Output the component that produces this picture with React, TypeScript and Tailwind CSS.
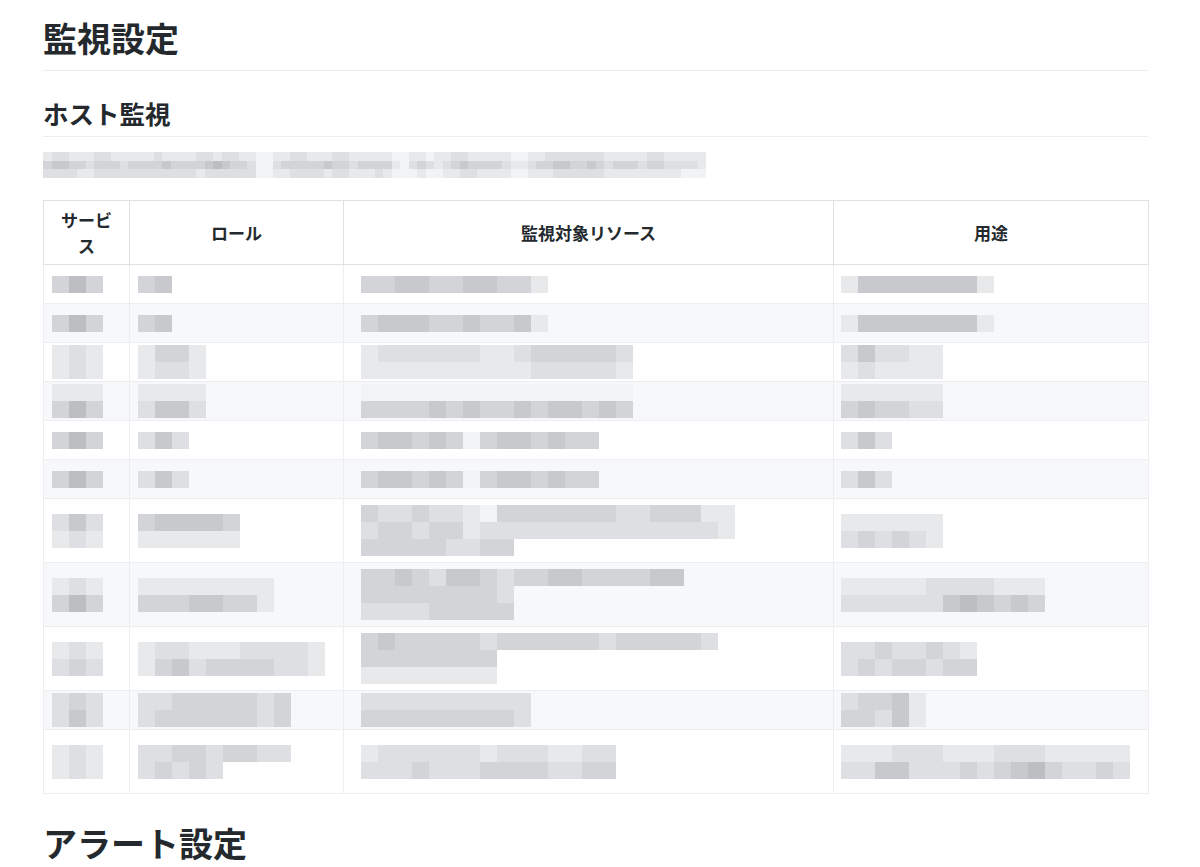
import React from 'react';

// pixelated (redacted) content is drawn as blocks of grey cells
const shade: Record<string, string> = {
    '.': 'bg-transparent',
    '1': 'bg-[#f2f3f5]',
    '2': 'bg-[#e8e9eb]',
    '3': 'bg-[#dedfe2]',
    '4': 'bg-[#d3d4d7]',
    '5': 'bg-[#c8c9cc]',
    '6': 'bg-[#bcbec1]',
};

interface MosaicProps {
    lines: string[];
    small?: boolean;
}

const Mosaic = ({ lines, small }: MosaicProps) => (
    <div className="flex flex-col">
        {lines.map((line, i) => (
            <div key={i} className="flex">
                {line.split('').map((ch, j) => (
                    <span
                        key={j}
                        className={`${small ? 'w-[8.5px] h-[8.7px]' : 'w-[17px] h-[17px]'} shrink-0 ${shade[ch] ?? 'bg-transparent'}`}
                    />
                ))}
            </div>
        ))}
    </div>
);

interface Row {
    h: string;
    c: string[][];
}

const rows: Row[] = [
    { h: 'h-[39px]', c: [['464'], ['45'], ['44554455442'], ['255555552']] },
    { h: 'h-[39px]', c: [['464'], ['45'], ['45554454452'], ['255555552']] },
    { h: 'h-[39px]', c: [['232', '232'], ['2442', '2332'], ['2333333223444443', '2222222222333332'], ['353322', '232222']] },
    { h: 'h-[39px]', c: [['222', '464'], ['2222', '3553'], ['1111111111111111', '4444545445455454'], ['222222', '454433']] },
    { h: 'h-[39px]', c: [['464'], ['353'], ['45545414554544'], ['353']] },
    { h: 'h-[39px]', c: [['464'], ['353'], ['45545414554544'], ['353']] },
    {
        h: 'h-[64px]',
        c: [
            ['353', '232'],
            ['455554', '222222'],
            ['4334332144444443344422', '3443442333333333333332', '444443344'],
            ['222222', '343432'],
        ],
    },
    {
        h: 'h-[64px]',
        c: [
            ['232', '464'],
            ['22222222', '44455442'],
            ['4454355434455444455', '444444443', '333344444'],
            ['222223333222', '333333565454'],
        ],
    },
    {
        h: 'h-[64px]',
        c: [
            ['232', '343'],
            ['23322233332', '24534444332'],
            ['454444434444443444443', '44444444', '22222222'],
            ['33433432', '34344344'],
        ],
    },
    { h: 'h-[39px]', c: [['343', '353'], ['334444434', '344444434'], ['3333333333', '4444444443'], ['34452', '44352']] },
    {
        h: 'h-[64px]',
        c: [
            ['232', '232'],
            ['334434433', '34343'],
            ['233333323332233', '333433344443344'],
            ['22233322233322222', '33553334345643343'],
        ],
    },
];

const paragraph = [
    '233222332222232222332332211223322233222221122122332222211223333333222223322222',
    '455443444344445444456544311344444544344442134323454444322344554454344434433332',
    '333322333333333333233333311223333233222321112112233222211222333333222222222111',
];

const pad = ['pl-2', 'pl-2', 'pl-[17px]', 'pl-[7px]'];

const App = () => {
    return (
        <div className="min-h-screen bg-white text-[#24292e] text-[17px] leading-[1.5] font-['Noto_Sans_CJK_JP','Liberation_Sans',sans-serif]">
            <div className="w-[1105px] ml-[43px] pt-[17px]">
                <h1 className="text-[34px] leading-[42px] font-bold pb-[11px] border-b border-[#eaecef]">監視設定</h1>
                <h2 className="mt-[26px] text-[25.5px] leading-[32px] font-bold pb-[7px] border-b border-[#eaecef]">ホスト監視</h2>

                <div className="mt-[15px] mb-[22px]">
                    <Mosaic lines={paragraph} small />
                </div>

                <table className="table-fixed border-collapse w-full border border-[#dfe2e5]">
                    <colgroup>
                        <col className="w-[86px]" />
                        <col className="w-[214px]" />
                        <col className="w-[490px]" />
                        <col className="w-[315px]" />
                    </colgroup>
                    <thead>
                        <tr className="bg-white">
                            {['サービス', 'ロール', '監視対象リソース', '用途'].map((t) => (
                                <th key={t} className="border border-[#dfe2e5] px-[13px] py-[6px] font-bold text-center">
                                    {t}
                                </th>
                            ))}
                        </tr>
                    </thead>
                    <tbody>
                        {rows.map((row, i) => (
                            <tr key={i} className={i % 2 === 1 ? 'bg-[#f6f8fa]' : 'bg-white'}>
                                {row.c.map((cell, j) => (
                                    <td key={j} className={`${row.h} ${pad[j]} pr-0 py-0 border border-[#eceef1] align-middle`}>
                                        <Mosaic lines={cell} />
                                    </td>
                                ))}
                            </tr>
                        ))}
                    </tbody>
                </table>

                <h1 className="mt-[28px] text-[34px] leading-[42px] font-bold">アラート設定</h1>
            </div>
        </div>
    );
};

export default App;
